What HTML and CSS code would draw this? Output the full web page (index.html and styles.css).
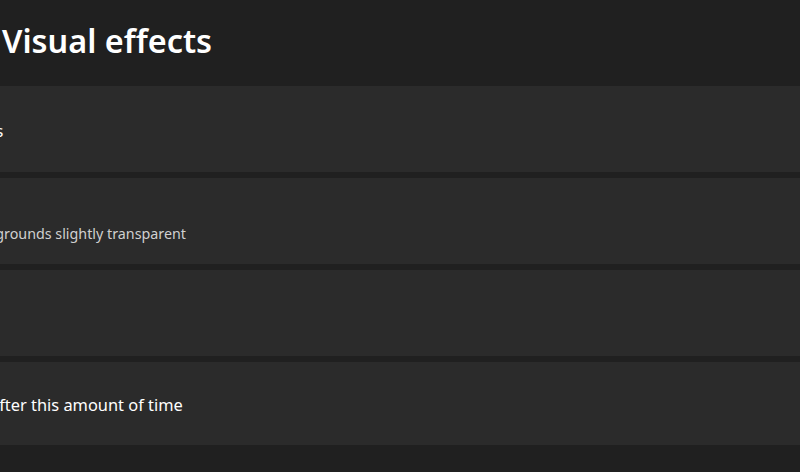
FILE: index.html
```html
<!DOCTYPE html>
<html lang="en">
<head>
<meta charset="utf-8">
<title>Visual effects</title>
<link rel="stylesheet" href="styles.css">
</head>
<body>
<main class="page">
  <header class="crumbs">
    <span class="crumb-parent">Accessibility</span>
    <svg class="crumb-chevron" width="16" height="16" viewBox="0 0 16 16" aria-hidden="true"><path d="M6 3l5 5-5 5" fill="none" stroke="#c8c8c8" stroke-width="1.5"/></svg>
    <h1 class="crumb-current">Visual effects</h1>
  </header>
  <section class="cards">
    <div class="card">
      <div class="card-text">
        <div class="card-title">Always show scrollbars</div>
      </div>
    </div>
    <div class="card">
      <div class="card-text">
        <div class="card-title">Transparency effects</div>
        <div class="card-desc">Make some window backgrounds slightly transparent</div>
      </div>
    </div>
    <div class="card">
      <div class="card-text">
        <div class="card-title">Animation effects</div>
      </div>
    </div>
    <div class="card card-last">
      <div class="card-text">
        <div class="card-title">Dismiss notifications after this amount of time</div>
      </div>
    </div>
  </section>
</main>
</body>
</html>
```

FILE: styles.css
```css
html, body {
  margin: 0;
  padding: 0;
  background: #202020;
  overflow: hidden;
  height: 100%;
}

body {
  font-family: "Noto Sans", "Open Sans", sans-serif;
  color: #ffffff;
}

.page {
  width: 1200px;
  margin-left: -173px;
}

.crumbs {
  display: flex;
  align-items: center;
  gap: 16px;
  height: 86px;
  box-sizing: border-box;
  padding-bottom: 6px;
  margin-left: -63px;
  white-space: nowrap;
}

.crumb-parent {
  width: 190px;
  font-size: 32.4px;
  font-weight: 600;
  color: #c8c8c8;
}

.crumb-chevron {
  flex: none;
}

.crumb-current {
  margin: 0;
  font-size: 32.4px;
  font-weight: 600;
  line-height: 44px;
  color: #ffffff;
}

.cards {
  display: flex;
  flex-direction: column;
  gap: 6px;
}

.card {
  height: 86px;
  background: #2b2b2b;
  display: flex;
  align-items: center;
}

.card-last {
  height: 83px;
}

.card-text {
  display: flex;
  flex-direction: column;
  white-space: nowrap;
  padding-top: 3px;
}

.card-title {
  font-size: 16.4px;
  line-height: 22px;
  color: #ffffff;
}

.card-desc {
  font-size: 14.3px;
  line-height: 20px;
  color: #d0d0d0;
}
```
